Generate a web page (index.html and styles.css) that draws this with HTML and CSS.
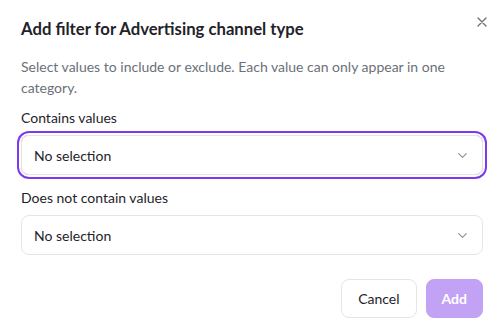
FILE: index.html
```html
<!DOCTYPE html>
<html lang="en">
<head>
<meta charset="utf-8">
<title>Add filter</title>
<link rel="stylesheet" href="styles.css">
</head>
<body>
<div class="dialog">
  <button class="close" aria-label="Close">
    <svg width="10" height="10" viewBox="0 0 10 10"><path d="M1 1L9 9M9 1L1 9" stroke="#6b6f78" stroke-width="1.3" stroke-linecap="round"/></svg>
  </button>
  <h2 class="title">Add filter for Advertising channel type</h2>
  <p class="desc">Select values to include or exclude. Each value can only appear in one category.</p>
  <div class="field">
    <div class="label">Contains values</div>
    <div class="select focused">
      <span>No selection</span>
      <svg class="chev" width="9" height="5" viewBox="0 0 9 5"><path d="M0.7 0.7L4.5 4.3L8.3 0.7" fill="none" stroke="#8a8e96" stroke-width="1.1" stroke-linecap="round" stroke-linejoin="round"/></svg>
    </div>
  </div>
  <div class="field">
    <div class="label">Does not contain values</div>
    <div class="select">
      <span>No selection</span>
      <svg class="chev" width="9" height="5" viewBox="0 0 9 5"><path d="M0.7 0.7L4.5 4.3L8.3 0.7" fill="none" stroke="#8a8e96" stroke-width="1.1" stroke-linecap="round" stroke-linejoin="round"/></svg>
    </div>
  </div>
  <div class="footer">
    <button class="btn cancel">Cancel</button>
    <button class="btn add">Add</button>
  </div>
</div>
</body>
</html>
```
FILE: styles.css
```css
* { box-sizing: border-box; }
html, body { margin: 0; background: #fff; }
body { font-family: Lato, "Noto Sans", sans-serif; color: #1f2329; }
.dialog {
  position: relative;
  padding: 17px 20px 13px 21px;
  width: 503px;
}
.close {
  position: absolute;
  top: 16px;
  right: 15px;
  width: 12px;
  height: 12px;
  padding: 0;
  border: 0;
  background: none;
  display: flex;
  align-items: center;
  justify-content: center;
}
.title {
  margin: 0;
  font-size: 16.7px;
  line-height: 24px;
  font-weight: 700;
  color: #1f2329;
}
.desc {
  margin: 15px 0 0;
  font-size: 14px;
  line-height: 21px;
  color: #6b7079;
}
.field { margin-top: 10px; }
.field + .field { margin-top: 13px; }
.label {
  font-size: 14px;
  line-height: 20px;
  color: #1f2329;
}
.select {
  margin-top: 7px;
  height: 40px;
  border: 1px solid #e4e5ea;
  border-radius: 8px;
  display: flex;
  align-items: center;
  justify-content: space-between;
  padding: 0 15px 0 12px;
  font-size: 14px;
  color: #1f2329;
}
.select.focused {
  box-shadow: 0 0 0 2px #fff, 0 0 0 4px #7c3aed;
}
.chev { margin-top: 1px; }
.footer {
  margin-top: 24px;
  display: flex;
  justify-content: flex-end;
  gap: 9px;
}
.btn {
  font-family: Lato, "Noto Sans", sans-serif;
  font-size: 14px;
  height: 39px;
  padding: 0 16px;
  border-radius: 8px;
  border: 1px solid #e4e5ea;
  background: #fff;
  color: #1f2329;
}
.btn.add {
  padding: 0 15px;
  background: #c2a2f4;
  border-color: #c2a2f4;
  color: #fff;
  font-weight: 700;
}
```
